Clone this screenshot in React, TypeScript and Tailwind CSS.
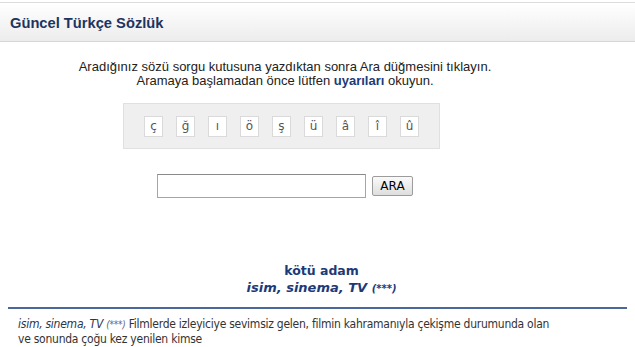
const chars = ["ç", "ğ", "ı", "ö", "ş", "ü", "â", "î", "û"];

export default function App() {
  return (
    <div className="w-[635px] h-[347px] bg-white overflow-hidden font-['Liberation_Sans',Arial,sans-serif]">
      <div className="pt-[2px]">
        <div className="h-[40px] flex items-center px-[10px] border-t border-[#dcdcdc] border-b border-b-[#d6d6d6] bg-gradient-to-b from-white to-[#ececec]">
          <h1 className="text-[14.7px] font-bold text-[#1d3461] pt-[2px]">Güncel Türkçe Sözlük</h1>
        </div>
      </div>

      <div className="w-[570px]">
        <div className="mt-[18px] text-center text-[13px] leading-[14px] text-[#222]">
          <p>Aradığınız sözü sorgu kutusuna yazdıktan sonra Ara düğmesini tıklayın.</p>
          <p>
            Aramaya başlamadan önce lütfen <span className="font-bold text-[#1d3a78]">uyarıları</span> okuyun.
          </p>
        </div>

        <div className="mt-[15px] ml-[123px] w-[317px] h-[46px] bg-[#efefef] border border-[#e0e0e0] flex items-center justify-center gap-[13px]">
          {chars.map((c) => (
            <span
              key={c}
              className="w-[19px] h-[21px] bg-white border border-[#dadada] flex items-center justify-center text-[12px] text-[#555] font-['DejaVu_Sans',sans-serif]"
            >
              {c}
            </span>
          ))}
        </div>

        <div className="mt-[25px] flex items-center ml-[157px] gap-[6px]">
          <input
            type="text"
            className="w-[209px] h-[24px] bg-white border border-[#a5a5a5] border-t-[#8a8a8a] outline-none"
          />
          <button className="w-[41px] h-[20px] border border-[#9c9c9c] rounded-[2px] bg-gradient-to-b from-[#fafafa] to-[#dedede] text-[12px] text-black font-['DejaVu_Sans',sans-serif] leading-none">
            ARA
          </button>
        </div>
      </div>

      <div className="mt-[64px] pl-[8px] text-center font-['DejaVu_Sans',sans-serif] text-[#1d3a78]">
        <div className="text-[12.5px] font-bold leading-[17px]">kötü adam</div>
        <div className="text-[13px] italic font-semibold leading-[17px]">
          isim, sinema, TV <span className="text-[10px]">(***)</span>
        </div>
      </div>

      <div className="mt-[10px] mx-[8px] h-[2px] bg-[#4c6799]" />

      <p className="mt-[8px] ml-[18px] w-[534px] text-[12px] leading-[15px] tracking-[-0.25px] text-[#333] font-['DejaVu_Sans',sans-serif] font-stretch-condensed">
        <span className="italic text-[#2a3550]">
          isim, sinema, TV <span className="text-[10px] text-[#667]">(***)</span>
        </span>{" "}
        Filmlerde izleyiciye sevimsiz gelen, filmin kahramanıyla çekişme durumunda olan ve sonunda çoğu kez yenilen kimse
      </p>
    </div>
  );
}
